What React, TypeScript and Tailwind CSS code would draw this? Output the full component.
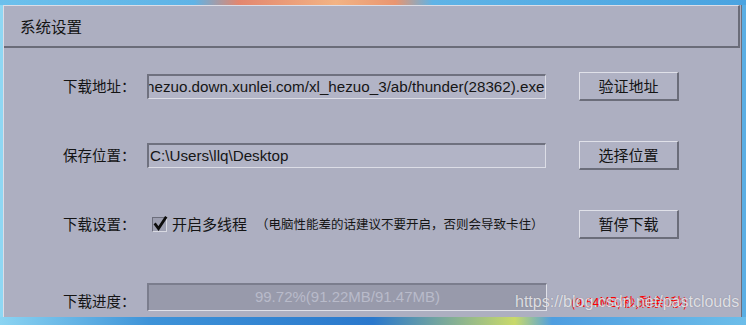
import type { ReactNode } from "react";

const cjk = { fontFamily: '"Noto Sans CJK SC", "Liberation Sans", sans-serif' };
const latin = { fontFamily: '"Liberation Sans", "Noto Sans CJK SC", sans-serif' };

function Label({ children, className = "" }: { children: ReactNode; className?: string }) {
  return (
    <div className={`w-[84px] shrink-0 text-[14.5px] leading-none text-[#141414] ${className}`} style={cjk}>
      {children}
    </div>
  );
}

function Button({ children }: { children: ReactNode }) {
  return (
    <div
      className="ml-[33px] w-[100px] h-[29px] shrink-0 flex items-center justify-center bg-[#b0b2c4] border-t border-l border-[#e0e1e9] border-b-2 border-r-2 border-b-[#6b6d7a] border-r-[#6b6d7a] text-[15px] text-[#141414]"
      style={cjk}
    >
      {children}
    </div>
  );
}

// text box: the url one is scrolled so its start is clipped
function Field({ value, shift = 1 }: { value: string; shift?: number }) {
  return (
    <div className="w-[399px] h-[25px] shrink-0 flex items-center overflow-hidden bg-[#b2b4c6] border-t-2 border-l-2 border-[#6f717f] border-b border-r border-b-[#dcdde6] border-r-[#dcdde6]">
      <span
        className="whitespace-nowrap text-[15.2px] text-[#161616] shrink-0"
        style={{ ...latin, marginLeft: shift }}
      >
        {value}
      </span>
    </div>
  );
}

export default function App() {
  return (
    <div className="relative w-[746px] h-[325px] flex flex-col overflow-hidden bg-[#55a8e0]">
      <div className="h-[5px] bg-[linear-gradient(90deg,#6cc0ec_0%,#5fb3e6_26%,#e3866e_32%,#f2b384_45%,#e99570_53%,#5fb3e6_58%,#4aa3e0_100%)]" />
      <div className="flex h-[312px]">
        <div className="w-[3px] bg-[#8fd7f3]" />
        <div className="w-[739px] h-[312px] flex flex-col bg-[#adafc1] border-l border-l-[#dcdde6] border-r border-r-[#6d6f7c]">
          <div className="h-[43px] flex items-center pl-[16px] pt-[2px] border-t border-t-[#dcdde6] border-b-2 border-b-[#6a6c79] border-r-2 border-r-[#6a6c79] mr-[1px]">
            <span className="text-[15.5px] text-[#141414]" style={cjk}>
              系统设置
            </span>
          </div>

          <div className="flex flex-col pl-[59px]">
            <div className="mt-[24px] h-[29px] flex items-center">
              <Label>下载地址：</Label>
              <Field value="hezuo.down.xunlei.com/xl_hezuo_3/ab/thunder(28362).exe" shift={-3} />
              <Button>验证地址</Button>
            </div>

            <div className="mt-[40px] h-[29px] flex items-center">
              <Label>保存位置：</Label>
              <Field value="C:\Users\llq\Desktop" />
              <Button>选择位置</Button>
            </div>

            <div className="mt-[40px] h-[29px] flex items-center">
              <Label>下载设置：</Label>
              <div className="w-[399px] shrink-0 flex items-center">
                <div className="ml-[5px] w-[15px] h-[15px] shrink-0 relative bg-[#9d9fb1] border-t border-l border-[#6c6e7c] border-b border-r border-b-[#d8d9e2] border-r-[#d8d9e2]">
                  <svg className="absolute -top-[2px] left-0" width="15" height="16" viewBox="0 0 15 16">
                    <path d="M2.5 8.5 L5.5 12.5 L12.5 2" fill="none" stroke="#0d0d0d" strokeWidth="2.8" strokeLinecap="square" />
                  </svg>
                </div>
                <span className="ml-[5px] shrink-0 whitespace-nowrap text-[15px] text-[#141414]" style={cjk}>
                  开启多线程
                </span>
                <span className="ml-[9px] shrink-0 text-[12.5px] text-[#141414] whitespace-nowrap" style={cjk}>
                  （电脑性能差的话建议不要开启，否则会导致卡住）
                </span>
              </div>
              <Button>暂停下载</Button>
            </div>

            <div className="mt-[43px] h-[29px] flex items-center">
              <Label className="mt-[9px]">下载进度：</Label>
              <div className="w-[400px] h-[28px] shrink-0 flex items-center justify-center bg-[#989aab] border-t-2 border-l-2 border-[#7b7d8d] border-b border-r border-b-[#e0e1e9] border-r-[#e0e1e9]">
                <span className="text-[15px] text-[#b9bbca]" style={latin}>
                  99.72%(91.22MB/91.47MB)
                </span>
              </div>
              <span className="ml-[24px] mt-[11px] text-[12.5px] text-[#ff0000] whitespace-nowrap" style={cjk}>
                (9.54MB/秒,剩余0秒)
              </span>
            </div>
          </div>
        </div>
        <div className="flex-1 bg-[#5aaee4]" />
      </div>
      <div className="h-[8px] bg-[linear-gradient(90deg,#8bd4f2_0%,#3e93d8_20%,#2a78cc_50%,#c9d96a_69%,#4f9ee0_74%,#6cbde9_100%)]" />

      <span
        className="absolute left-[515px] top-[293px] text-[16px] leading-[18px] text-white/75 whitespace-nowrap [text-shadow:0_0_1px_rgba(90,90,110,0.6)]"
        style={latin}
      >
        https://blog.csdn.net/pastclouds
      </span>
    </div>
  );
}
